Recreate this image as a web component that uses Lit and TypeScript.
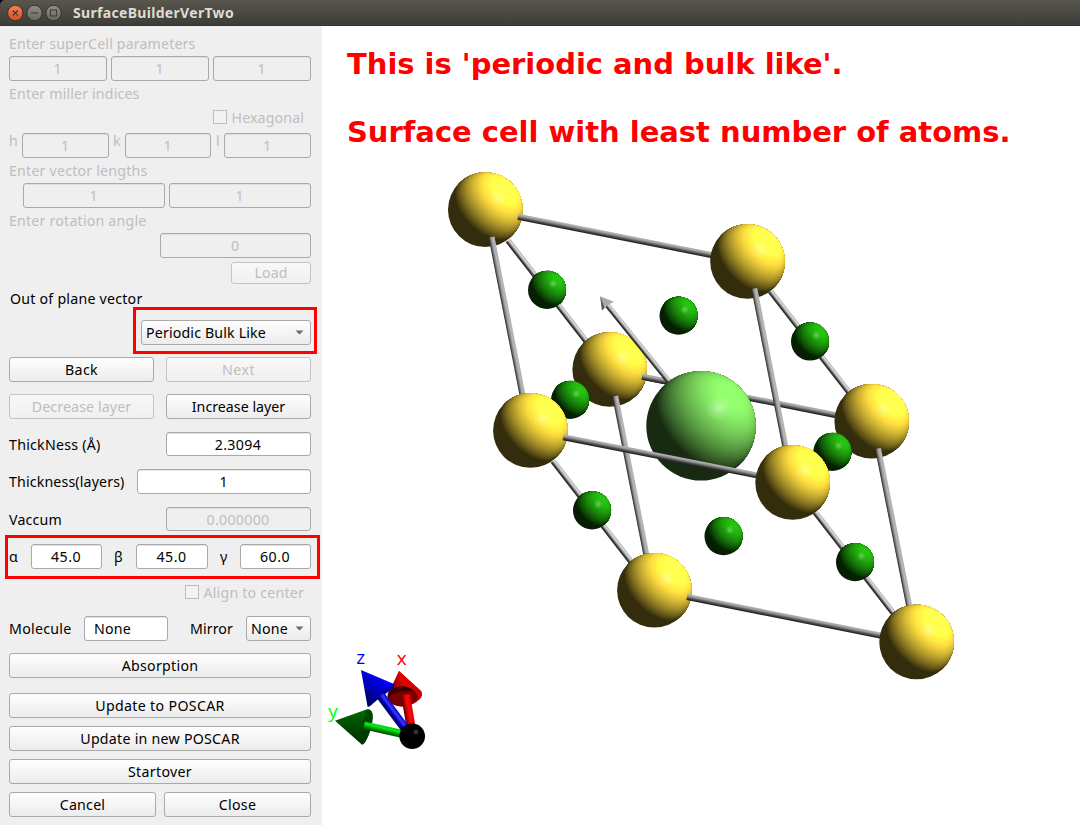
import { LitElement, html, svg, css } from "lit";
import { customElement, property } from "lit/decorators.js";
import { classMap } from "lit/directives/class-map.js";

/** A single line of text tracked so that it spans exactly `w` pixels. */
@customElement("fit-text")
class FitText extends LitElement {
  @property({ type: Number }) w = 0;
  @property() text = "";
  static styles = css`
    :host { display: inline-block; white-space: pre; flex: none; }
    .t { display: inline-block; }
  `;
  updated() {
    const el = this.renderRoot.querySelector(".t") as HTMLElement;
    el.style.letterSpacing = "0";
    const natural = el.getBoundingClientRect().width;
    const gap = (this.w - natural) / this.text.length;
    if (this.w > 0) el.style.letterSpacing = `${gap.toFixed(3)}px`;
  }
  render() {
    return html`<span class="t">${this.text}</span>`;
  }
}

const fit = (text: string, w: number) => html`<fit-text .text=${text} .w=${w}></fit-text>`;

const field = (text: string, w: number, size: string, off = false) =>
  html`<div class=${classMap({ ctl: true, field: true, off, [size]: true })}>${fit(text, w)}</div>`;

const button = (text: string, w: number, size: string, off = false) =>
  html`<div class=${classMap({ ctl: true, btn: true, off, [size]: true })}>${fit(text, w)}</div>`;

const arrow = html`<svg class="arrow" width="9" height="5" viewBox="0 0 9 5"><path d="M0.5 0.4H8.5L4.5 4.6Z" fill="#6a6a6a" /></svg>`;

type RGB = [number, number, number];
const YELLOW: RGB = [255, 221, 64];
const GREEN: RGB = [31, 157, 14];
const LIME: RGB = [120, 210, 90];

const lit = (c: RGB, k: number) =>
  `rgb(${c.map((v) => Math.min(255, Math.round(v * (0.2 + k)))).join(",")})`;

/** Unit sphere lit from direction (1,1,1): nested bands of equal brightness. */
const ball = (id: string, base: RGB, shine: number) => {
  const s = Math.sqrt(2 / 3);
  const c = Math.sqrt(1 / 3);
  const bands = [];
  const steps = 60;
  for (let i = 0; i < steps; i++) {
    const k = i / steps;
    const r = Math.sqrt(1 - k * k);
    const fill = lit(base, (k + 0.5 / steps) * 1.06);
    if (k < s) {
      const u = k / s;
      const v = Math.sqrt(1 - u * u);
      bands.push(svg`<path fill=${fill} d=${`M${u} ${-v}A${r * c} ${r} 0 ${k > 0 ? 1 : 0} 0 ${u} ${v}A1 1 0 0 0 ${u} ${-v}Z`} />`);
    } else {
      bands.push(svg`<ellipse fill=${fill} cx=${k * s} cy="0" rx=${r * c} ry=${r} />`);
    }
  }
  return svg`<g id=${id}>
    <circle r="1" fill=${lit(base, 0)} />
    <g transform="rotate(-45)">${bands}</g>
    <circle cx="0.325" cy="-0.325" r="0.24" fill="url(#shine)" opacity=${shine} />
  </g>`;
};

const put = (id: string, x: number, y: number, r: number) =>
  svg`<use href=${"#" + id} transform=${`translate(${x} ${y}) scale(${r})`} />`;

const rod = (kind: string, x1: number, y1: number, x2: number, y2: number, w = 6) => {
  const len = Math.hypot(x2 - x1, y2 - y1);
  const a = (Math.atan2(y2 - y1, x2 - x1) * 180) / Math.PI;
  return svg`<rect x="0" y=${-w / 2} width=${len} height=${w} fill=${`url(#${kind})`} transform=${`translate(${x1} ${y1}) rotate(${a})`} />`;
};

@customElement("crystal-view")
class CrystalView extends LitElement {
  static styles = css`
    :host { display: block; background: #fff; }
    svg { display: block; }
    .caption { font: bold 29px "DejaVu Sans", sans-serif; fill: #f00; }
    .axis { font: 19px "Open Sans", "Noto Sans", sans-serif; }
  `;
  render() {
    return html`<svg width="758" height="799" viewBox="322 26 758 799">
      <defs>
        <radialGradient id="shine">
          <stop offset="0" stop-color="#fff" stop-opacity="1" />
          <stop offset="0.45" stop-color="#fff" stop-opacity="0.45" />
          <stop offset="1" stop-color="#fff" stop-opacity="0" />
        </radialGradient>
        <linearGradient id="ra" x2="0" y2="1">
          <stop offset="0" stop-color="#b4b4b4" /><stop offset="0.3" stop-color="#a0a0a0" />
          <stop offset="0.6" stop-color="#5c5c5c" /><stop offset="0.85" stop-color="#2a2a2a" /><stop offset="1" stop-color="#222" />
        </linearGradient>
        <linearGradient id="rb" x2="0" y2="1">
          <stop offset="0" stop-color="#b4b4b4" /><stop offset="0.4" stop-color="#b4b4b4" />
          <stop offset="0.7" stop-color="#7c7c7c" /><stop offset="1" stop-color="#222" />
        </linearGradient>
        <linearGradient id="rc" x2="0" y2="1">
          <stop offset="0" stop-color="#b8b8b8" /><stop offset="0.35" stop-color="#d8d8d8" />
          <stop offset="0.58" stop-color="#888" /><stop offset="0.8" stop-color="#303030" /><stop offset="1" stop-color="#202020" />
        </linearGradient>
        <linearGradient id="gs" x2="0" y2="1">
          <stop offset="0" stop-color="#004a00" /><stop offset="0.35" stop-color="#008a00" />
          <stop offset="0.7" stop-color="#00f018" /><stop offset="1" stop-color="#00c800" />
        </linearGradient>
        <linearGradient id="bs" x2="0" y2="1">
          <stop offset="0" stop-color="#0000d0" /><stop offset="0.35" stop-color="#3a3aff" />
          <stop offset="0.65" stop-color="#0000b0" /><stop offset="1" stop-color="#000050" />
        </linearGradient>
        <linearGradient id="rs" x2="0" y2="1">
          <stop offset="0" stop-color="#d80000" /><stop offset="0.45" stop-color="#ff0808" />
          <stop offset="1" stop-color="#600000" />
        </linearGradient>
        <linearGradient id="gc" x1="0.6" y1="0" x2="0.5" y2="1">
          <stop offset="0" stop-color="#007000" /><stop offset="0.4" stop-color="#005000" /><stop offset="1" stop-color="#002c00" />
        </linearGradient>
        <linearGradient id="bc" x1="0.15" y1="0.85" x2="0.6" y2="0.25">
          <stop offset="0" stop-color="#000060" /><stop offset="0.5" stop-color="#0000b8" /><stop offset="1" stop-color="#0000f4" />
        </linearGradient>
        <linearGradient id="rcn" x1="0.1" y1="0.6" x2="0.8" y2="0.4">
          <stop offset="0" stop-color="#900000" /><stop offset="0.5" stop-color="#e80000" /><stop offset="1" stop-color="#c80000" />
        </linearGradient>
        ${ball("y", YELLOW, 0.34)}${ball("g", GREEN, 0.36)}${ball("b", LIME, 0.42)}
      </defs>

      <text class="caption" x="347" y="74" textLength="495.5">This is 'periodic and bulk like'.</text>
      <text class="caption" x="347" y="142" textLength="663.5">Surface cell with least number of atoms.</text>

      ${rod("ra", 640, 376.4, 840, 416)}
      ${put("y", 485.3, 209.7, 37.3)}
      ${rod("rc", 508, 240.5, 590, 346, 5.8)} ${put("y", 609.7, 369.5, 37.3)}
      ${rod("ra", 642, 376.8, 668, 381.8)}
      ${rod("rc", 606, 303.5, 671, 384, 5.2)}
      <path d="M600.2 296.2L613.8 301.8L608 305L602 310.4Z" fill="#aaa" /><path d="M600.2 296.2L604.5 307.8L602 310.4Z" fill="#555" />
      ${rod("rb", 615.2, 396.2, 647, 558)}
      ${put("b", 701, 425.9, 54.7)}
      ${rod("ra", 518, 216.8, 716, 256)}
      ${put("y", 747.5, 261.5, 37.3)}
      ${rod("rc", 770.3, 291, 852, 396, 5.8)} ${put("y", 871.7, 421.3, 37.3)}
      ${put("g", 547, 289.9, 19)} ${put("g", 678.5, 315.8, 19)} ${put("g", 810, 341.6, 19)}
      ${put("g", 570, 400, 19)} ${put("g", 832.3, 452, 19)}
      ${rod("rb", 491.5, 237, 523.5, 400)} ${rod("rb", 754.3, 288.5, 786, 450)}
      ${put("y", 530.4, 430.5, 37.3)}
      ${rod("ra", 563.2, 437.2, 762, 476.4)}
      ${rod("rc", 553, 461, 636, 568, 5.8)} ${rod("rc", 815, 512, 898, 619, 5.8)}
      ${put("y", 792.6, 482.5, 37.3)}
      ${put("g", 592, 510.4, 19)} ${put("g", 723.5, 536.2, 19)} ${put("g", 855, 562.2, 19)}
      ${put("y", 654.4, 590.3, 37.3)}
      ${rod("rb", 878, 448.5, 910, 610)} ${rod("ra", 687, 597, 884, 636.3)}
      ${put("y", 916.6, 642, 37.3)}

      <g>
        <path d="M399 671L421 691Q423.500 695 420 699Q413 706 403 706.500Q392 706 388 700Q386.500 695 391 690Z" fill="url(#rcn)" />
        <path d="M388 699Q386 692 393 687.500Q400 684.500 408 686.500Q415 689 418 694.500Q418 699 415 702Q410 706.500 401 706.500Q390 705 388 699Z" fill="#780000" />
        <path d="M399 671L421 691Q423 695 419 699Q417 690 406 686.500Q398 685 390 690Z" fill="url(#rcn)" />
        <path d="M388 699Q387 692 393 688Q400 685 407 687Q413 689 415 692Q407 690 399 692Q391 694 388 699Z" fill="#3c0000" />
        ${rod("rs", 405.5, 694.5, 411.5, 730, 9)}
        <path d="M335 720.700L367.700 709Q372.500 709 372.800 717Q372 730 365.500 741.500Q363.500 745 361.500 744.300Z" fill="url(#gc)" />
        <path d="M366 711Q372.500 707.500 372.800 717Q372 730 365.500 741.500Q363.500 745 361.500 744.300Q361 728 366 711Z" fill="#003a00" opacity="0.7" />
        ${rod("gs", 403, 734.2, 364, 725.3, 8)}
        <path d="M361 670L394.500 684.300Q395.500 687 388 692Q379 697.500 373 703.500Q369 707.500 367.500 706.500Z" fill="url(#bc)" />
        <path d="M394.500 684.300Q395.500 687 388 692Q379 697.500 373 703.500L377 697Q384 689 394.500 684.300Z" fill="#00006c" opacity="0.5" />
        ${rod("bs", 380.500, 695.500, 407, 731, 9)}
        <circle cx="412.200" cy="736.300" r="12.800" fill="#000" />
        <circle cx="416" cy="732" r="3.500" fill="url(#shine)" opacity="0.35" />
        <text class="axis" x="356.300" y="663.500" fill="#00f">z</text>
        <text class="axis" x="396.800" y="664.500" fill="#f00">x</text>
        <text class="axis" x="328.200" y="717.500" fill="#0f0">y</text>
      </g>
    </svg>`;
  }
}

@customElement("app-root")
class AppRoot extends LitElement {
  static styles = css`
    :host {
      display: flex; flex-direction: column; width: 1080px; height: 825px; overflow: hidden;
      background: #fff; color: #000;
      font-family: "Noto Sans", "Open Sans", sans-serif; font-size: 14.2px; line-height: 16px;
    }
    .title {
      height: 26px; flex: none; box-sizing: border-box; display: flex; align-items: center; padding: 0 0 0 6px;
      background: linear-gradient(#58564d, #3d3c38); border-radius: 5px 0 0 0; color: #dfdbd2;
      border-bottom: 1px solid #34332f;
    }
    .title svg { display: block; flex: none; margin-right: 9px; }
    .name { font-weight: 700; font-size: 14px; padding-top: 1px; }
    .corner { background: #000; }
    .body { display: flex; flex: 1; }
    .side { width: 322px; flex: none; box-sizing: border-box; padding: 0 11px 0 9px; background: #efefef; }
    .row { display: flex; align-items: center; height: 25px; position: relative; }
    .label { height: 16px; }
    .off { color: #bebebe; }
    .end { justify-content: flex-end; }
    .between { justify-content: space-between; }
    .gap { gap: 4px; }
    .m4 { margin-top: 4px; } .m5 { margin-top: 5px; } .m7 { margin-top: 7px; } .m8 { margin-top: 8px; }
    .m9 { margin-top: 9px; } .m10 { margin-top: 10px; } .m12 { margin-top: 12px; } .m13 { margin-top: 13px; }
    .m15 { margin-top: 15px; } .m16 { margin-top: 16px; } .m17 { margin-top: 17px; }
    .h14 { height: 14px; } .h22 { height: 22px; } .h24 { height: 24px; }
    .h14 fit-text, .h24 fit-text { padding-top: 2px; }
    .indent { padding-left: 1px; }
    .ctl {
      box-sizing: border-box; height: 100%; border: 1px solid #a9a9a9; border-radius: 3px; flex: none;
      display: flex; align-items: center; justify-content: center;
    }
    .field { background: #fff; box-shadow: inset 0 1px 0 #e4e4e4; padding-right: 1px; }
    .field.off { background: #efefef; box-shadow: inset 0 1px 0 #e0e0e0; }
    .btn { background: linear-gradient(#fefefe, #ececec); }
    .btn.off { border-color: #c4c4c4; background: linear-gradient(#f8f8f8, #f0f0f0); }
    .w98 { width: 98px; } .w87 { width: 87px; } .w86 { width: 86px; } .w142 { width: 142px; }
    .w151 { width: 151px; } .w80 { width: 80px; } .w145 { width: 145px; } .w174 { width: 174px; }
    .w71 { width: 71px; } .w72 { width: 72px; } .w302 { width: 302px; } .w147 { width: 147px; }
    .mol { width: 84px; justify-content: flex-start; padding-left: 9px; }
    .combo { justify-content: space-between; padding: 0 6px 0 4px; }
    .w170 { width: 170px; } .w65 { width: 65px; }
    .hkl { display: grid; grid-template-columns: 13px 87px 16px 86px 13px 87px; align-items: start; }
    .hkl .k { padding-left: 4px; } .hkl .l { padding-left: 5px; }
    .angles { display: grid; grid-template-columns: 22px 71px 34px 72px 32px 71px; }
    .angles .b { padding-left: 12px; }
    .mm { display: grid; grid-template-columns: 75px 106px 56px 65px; }
    .box { width: 14px; height: 14px; box-sizing: border-box; border: 1px solid #bdbdbd; background: #f2f2f2; margin-right: 5px; }
    .tick { padding-right: 7px; }
    .mark { position: absolute; border: 3px solid #f00; box-sizing: border-box; }
    .mark-combo { left: 124px; top: -13px; width: 184px; height: 47px; }
    .mark-angles { left: -4px; top: -9px; width: 315px; height: 44px; }
    .arrow { display: block; }
  `;
  render() {
    return html`
      <div class="corner"><div class="title">
        <svg width="58" height="18" viewBox="6 4 58 18">
          <defs>
            <linearGradient id="o" x2="0" y2="1"><stop offset="0" stop-color="#f4815a" /><stop offset="1" stop-color="#dd4a1e" /></linearGradient>
            <linearGradient id="n" x2="0" y2="1"><stop offset="0" stop-color="#8f8c84" /><stop offset="1" stop-color="#6a6862" /></linearGradient>
          </defs>
          <circle cx="15.300" cy="13" r="7.700" fill="url(#o)" stroke="#33322e" />
          <circle cx="34.500" cy="13" r="7.700" fill="url(#n)" stroke="#33322e" />
          <circle cx="53.500" cy="13" r="7.700" fill="url(#n)" stroke="#33322e" />
          <path d="M12.800 10.500L17.800 15.500M17.800 10.500L12.800 15.500M31 13H38M50.500 10H56.500V16H50.500Z" fill="none" stroke="#3a3935" stroke-width="1.100" />
        </svg>
        <div class="name">${fit("SurfaceBuilderVerTwo", 161)}</div>
      </div></div>
      <div class="body">
        <div class="side">
          <div class="row label off m10">${fit("Enter superCell parameters", 186.5)}</div>
          <div class="row between m4">${[0, 1, 2].map(() => field("1", 0, "w98", true))}</div>
          <div class="row label off m5">${fit("Enter miller indices", 130.5)}</div>
          <div class="row off end tick h14 m8"><div class="box"></div>${fit("Hexagonal", 72.5)}</div>
          <div class="row hkl off m9">
            <div>h</div>${field("1", 0, "w87", true)}<div class="k">k</div>${field("1", 0, "w86", true)}<div class="l">l</div>${field("1", 0, "w87", true)}
          </div>
          <div class="row label off m5">${fit("Enter vector lengths", 138.5)}</div>
          <div class="row end gap m4">${field("1", 0, "w142", true)}${field("1", 0, "w142", true)}</div>
          <div class="row label off m5">${fit("Enter rotation angle", 137.5)}</div>
          <div class="row end m4">${field("0", 0, "w151", true)}</div>
          <div class="row end h22 m4">${button("Load", 33, "w80", true)}</div>
          <div class="row label indent m7">${fit("Out of plane vector", 132.5)}</div>
          <div class="row end m13">
            <div class="ctl btn combo w170">${fit("Periodic Bulk Like", 120)}${arrow}</div>
            <div class="mark mark-combo"></div>
          </div>
          <div class="row between m12">${button("Back", 33, "w145")}${button("Next", 33, "w145", true)}</div>
          <div class="row between m12">${button("Decrease layer", 99.5, "w145", true)}${button("Increase layer", 93.5, "w145")}</div>
          <div class="row between h24 m13">${fit("ThickNess (Å)", 91.5)}${field("2.3094", 46.5, "w145")}</div>
          <div class="row between m13">${fit("Thickness(layers)", 115.5)}${field("1", 0, "w174")}</div>
          <div class="row between h24 m13">${fit("Vaccum", 53)}${field("0.000000", 63, "w145", true)}</div>
          <div class="row angles m13">
            <div>α</div>${field("45.0", 30, "w71")}<div class="b">β</div>${field("45.0", 30, "w72")}<div class="b">γ</div>${field("60.0", 30, "w71")}
            <div class="mark mark-angles"></div>
          </div>
          <div class="row off end tick h14 m16"><div class="box"></div>${fit("Align to center", 100.5)}</div>
          <div class="row mm m17">
            ${fit("Molecule", 62.5)}<div class="ctl field mol">${fit("None", 37)}</div>${fit("Mirror", 43)}
            <div class="ctl btn combo w65">${fit("None", 37)}${arrow}</div>
          </div>
          <div class="row m12">${button("Absorption", 76.5, "w302")}</div>
          <div class="row m15">${button("Update to POSCAR", 129.5, "w302")}</div>
          <div class="row m8">${button("Update in new POSCAR", 159.5, "w302")}</div>
          <div class="row m8">${button("Startover", 64, "w302")}</div>
          <div class="row between m8">${button("Cancel", 45.5, "w147")}${button("Close", 37.5, "w147")}</div>
        </div>
        <crystal-view></crystal-view>
      </div>
    `;
  }
}
